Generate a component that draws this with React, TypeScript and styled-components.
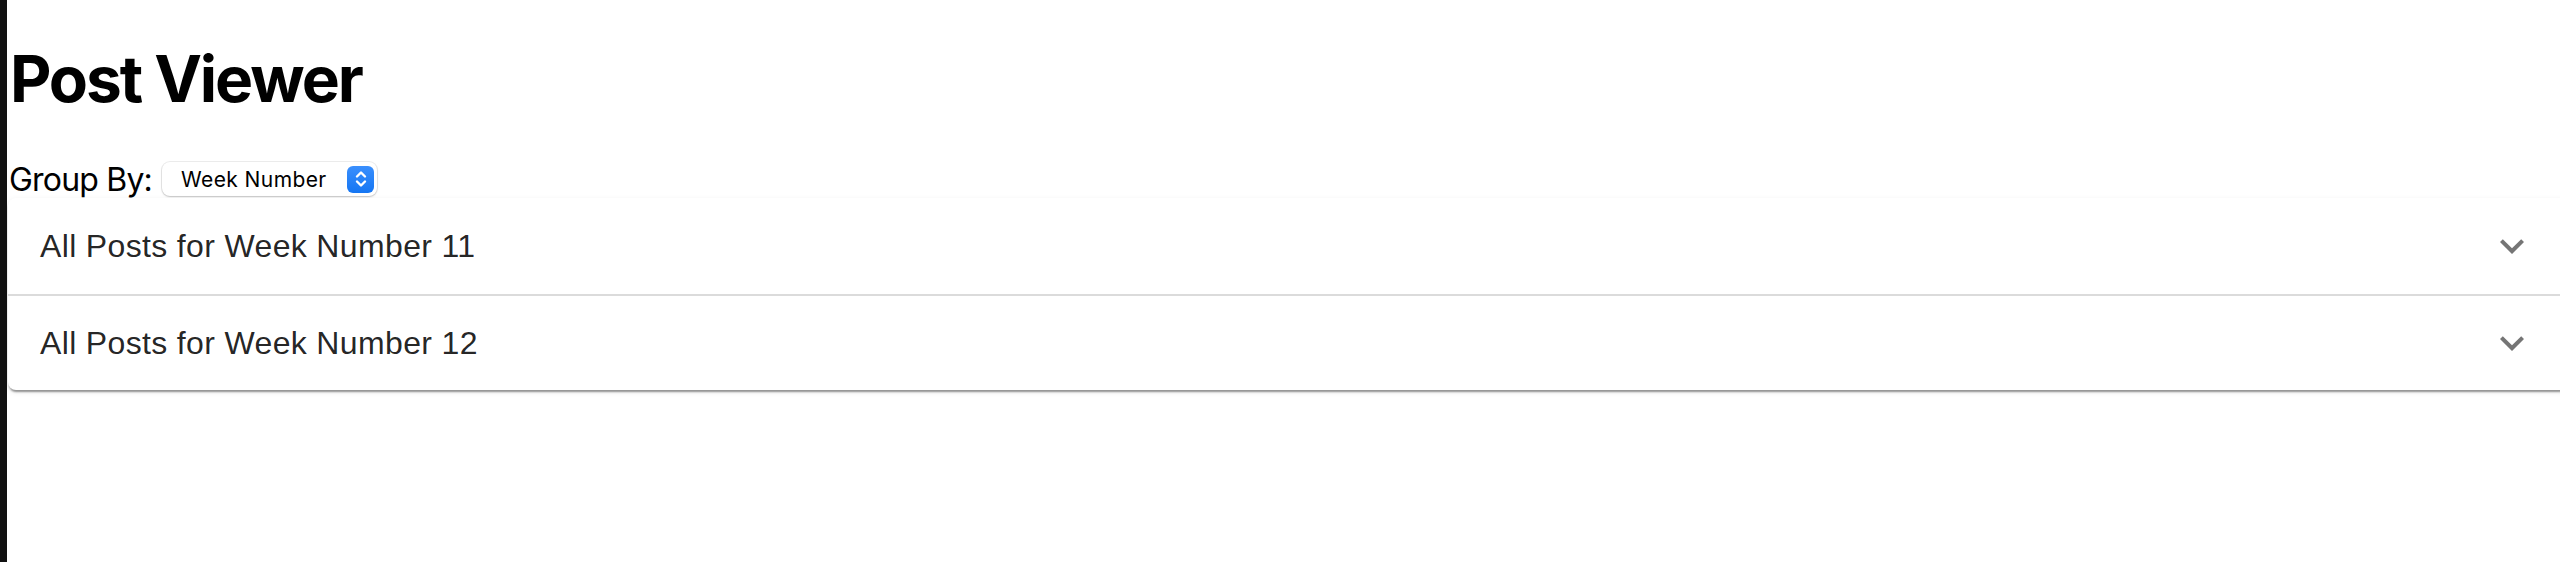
import { FC, useState } from "react"
import styled, { createGlobalStyle } from "styled-components"

const GlobalStyle = createGlobalStyle`
  html {
    min-height: 100%;
    overflow: hidden;
    background: #fff;
    border-left: 7px solid #111;
  }
  body {
    margin: 0;
    padding: 0 0 0 1px;
    font-family: Inter, "Noto Sans", sans-serif;
    color: #000;
  }
`

// #region styled
const Page = styled.div`
  display: flex;
  flex-direction: column;
  margin-right: -8px;
  padding-bottom: 8px;
`

const Title = styled.h1`
  margin: 40px 0 43px;
  padding-left: 2px;
  font-size: 64px;
  line-height: 77px;
  font-weight: 700;
  letter-spacing: -2.1px;
`

const Toolbar = styled.div`
  display: flex;
  align-items: center;
  gap: 10px;
  height: 38px;
  font-size: 32px;
`

const Label = styled.label`
  padding-left: 1px;
  letter-spacing: -0.8px;
`

const SelectBox = styled.div`
  display: flex;
  align-items: center;
  width: 215px;
  height: 34px;
  box-sizing: border-box;
  padding: 0 3px 0 0;
  border-radius: 8px;
  background: #fff;
  box-shadow: 0 0 0 1px rgba(0, 0, 0, 0.07), 0 1px 2px rgba(0, 0, 0, 0.18);
`

const NativeSelect = styled.select`
  appearance: none;
  flex: 1;
  min-width: 0;
  height: 100%;
  border: none;
  outline: none;
  background: transparent;
  padding: 0 0 0 19px;
  font-family: Inter, "Noto Sans", sans-serif;
  font-size: 21px;
  letter-spacing: 0.4px;
  color: #000;
`

const Stepper = styled.span`
  display: flex;
  align-items: center;
  justify-content: center;
  width: 27px;
  height: 27px;
  border-radius: 6px;
  background: linear-gradient(#3a8ffd, #1576f3);
  pointer-events: none;
`

const Accordion = styled.div`
  display: flex;
  flex-direction: column;
  border-radius: 8px;
  background: #fff;
  box-shadow: 0 4px 2px -2px rgba(0, 0, 0, 0.28), 0 2px 2px 0 rgba(0, 0, 0, 0.16),
    0 2px 6px 0 rgba(0, 0, 0, 0.08);
`

const Row = styled.button<{ $first?: boolean }>`
  display: flex;
  align-items: center;
  justify-content: space-between;
  height: 96px;
  padding: 0 32px;
  border: none;
  border-top: ${p => (p.$first ? "none" : "2px solid rgba(0, 0, 0, 0.14)")};
  background: transparent;
  font-family: "Liberation Sans", Arial, sans-serif;
  font-size: 32px;
  line-height: 48px;
  letter-spacing: 0.35px;
  color: rgba(0, 0, 0, 0.87);
  text-align: left;
  cursor: pointer;
`

const Chevron = styled.svg<{ $open: boolean }>`
  width: 48px;
  height: 48px;
  fill: rgba(0, 0, 0, 0.54);
  transform: rotate(${p => (p.$open ? 180 : 0)}deg);
`
// #endregion

const weeks = [11, 12]

const App: FC = () => {
  const [groupBy, setGroupBy] = useState("week")
  const [open, setOpen] = useState<number | null>(null)

  return (
    <>
      <GlobalStyle />
      <Page>
        <Title>Post Viewer</Title>
        <Toolbar>
          <Label htmlFor="group-by">Group By:</Label>
          <SelectBox>
            <NativeSelect id="group-by" value={groupBy} onChange={e => setGroupBy(e.target.value)}>
              <option value="week">Week Number</option>
              <option value="author">Author</option>
            </NativeSelect>
            <Stepper>
              <svg width="14" height="20" viewBox="0 0 14 20" fill="none" stroke="#fff" strokeWidth="2.4" strokeLinecap="round" strokeLinejoin="round">
                <path d="M3 7.5 7 3.5l4 4" />
                <path d="M3 12.5l4 4 4-4" />
              </svg>
            </Stepper>
          </SelectBox>
        </Toolbar>
        <Accordion>
          {weeks.map((w, i) => (
            <Row key={w} $first={i === 0} onClick={() => setOpen(open === w ? null : w)}>
              <span>All Posts for Week Number {w}</span>
              <Chevron $open={open === w} viewBox="0 0 24 24">
                <path d="M16.59 8.59 12 13.17 7.41 8.59 6 10l6 6 6-6z" />
              </Chevron>
            </Row>
          ))}
        </Accordion>
      </Page>
    </>
  )
}

export default App
